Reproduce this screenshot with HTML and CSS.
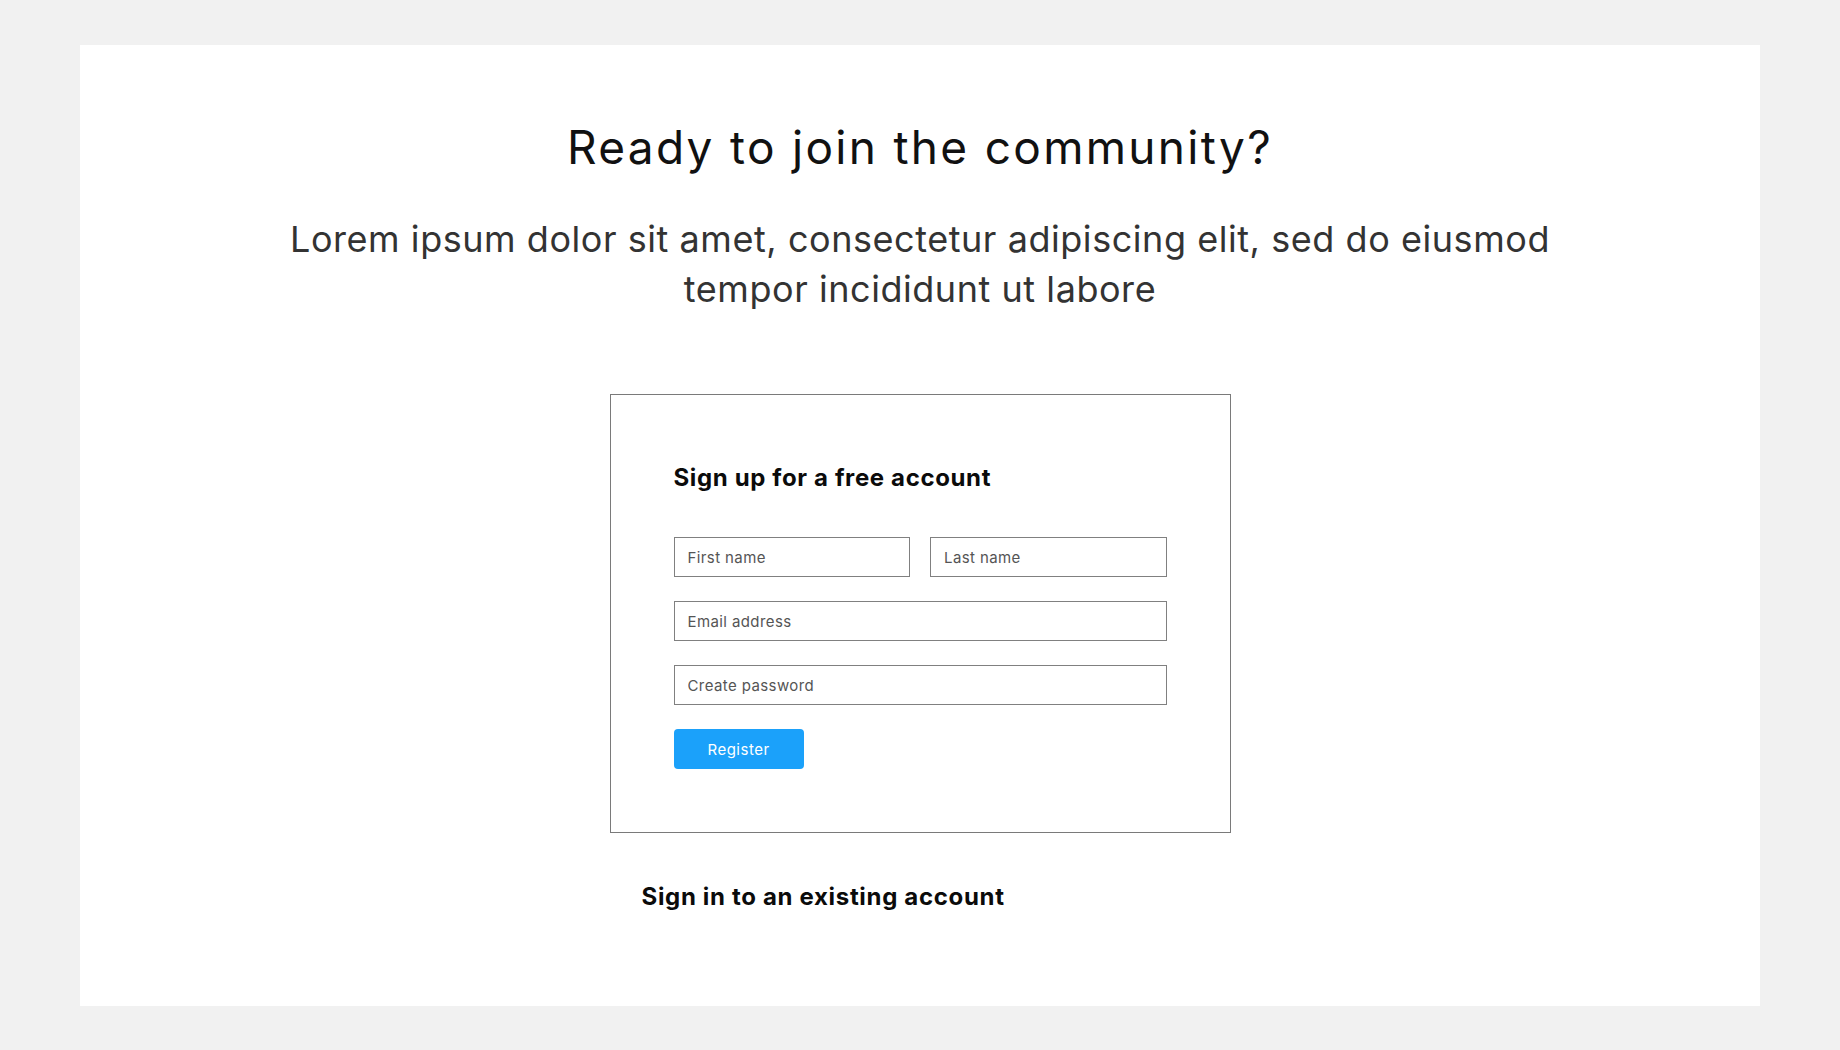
FILE: index.html
```html
<!DOCTYPE html>
<html lang="en">
<head>
<meta charset="utf-8">
<title>Join the community</title>
<link rel="stylesheet" href="styles.css">
</head>
<body>
  <main class="card">
    <h1 class="title">Ready to join the community?</h1>
    <p class="lead">Lorem ipsum dolor sit amet, consectetur adipiscing elit, sed do eiusmod tempor incididunt ut labore</p>
    <form class="signup">
      <h2 class="signup-title">Sign up for a free account</h2>
      <div class="row">
        <input class="field" type="text" placeholder="First name">
        <input class="field" type="text" placeholder="Last name">
      </div>
      <input class="field" type="email" placeholder="Email address">
      <input class="field" type="password" placeholder="Create password">
      <button class="btn" type="button">Register</button>
    </form>
    <div class="signin-wrap">
      <a class="signin" href="#">Sign in to an existing account</a>
    </div>
  </main>
</body>
</html>
```

FILE: styles.css
```css
* { box-sizing: border-box; }
html, body { margin: 0; padding: 0; }
body {
  background: #f1f1f1;
  font-family: "Inter", "Open Sans", "DejaVu Sans", sans-serif;
  color: #111;
}
.card {
  margin: 45px 80px 44px;
  background: #fff;
  height: 961px;
  display: flex;
  flex-direction: column;
  align-items: center;
  padding-top: 73px;
}
.title {
  margin: 0;
  font-size: 46px;
  font-weight: 400;
  line-height: 58px;
  letter-spacing: 2.3px;
  color: #111;
}
.lead {
  margin: 38px 0 0;
  max-width: 1300px;
  text-align: center;
  font-size: 36px;
  font-weight: 400;
  line-height: 50px;
  letter-spacing: 0.55px;
  color: #333;
}
.signup {
  margin-top: 80px;
  width: 621px;
  border: 1px solid #7a7a7a;
  padding: 68px 63px 63px;
  display: flex;
  flex-direction: column;
  gap: 24px;
}
.signup-title {
  margin: 0 0 20px;
  font-size: 24px;
  font-weight: 700;
  line-height: 30px;
  letter-spacing: 0.63px;
  color: #0b0b0b;
}
.row {
  display: flex;
  gap: 20px;
}
.row .field { flex: 1; min-width: 0; }
.field {
  height: 40px;
  border: 1px solid #808080;
  border-radius: 0;
  padding: 0 13px;
  font-family: inherit;
  font-size: 15px;
  letter-spacing: 0.4px;
  color: #444;
  background: #fff;
  outline: none;
}
.field::placeholder { color: #555; opacity: 1; }
.btn {
  align-self: flex-start;
  width: 130px;
  height: 40px;
  border: 0;
  border-radius: 4px;
  background: #1ba1fa;
  color: #fff;
  font-family: inherit;
  font-size: 15px;
  letter-spacing: 0.5px;
  cursor: pointer;
}
.signin-wrap {
  width: 621px;
  padding-left: 32px;
  margin-top: 49px;
}
.signin {
  font-size: 24px;
  font-weight: 700;
  line-height: 30px;
  letter-spacing: 0.67px;
  color: #0b0b0b;
  text-decoration: none;
}
```
